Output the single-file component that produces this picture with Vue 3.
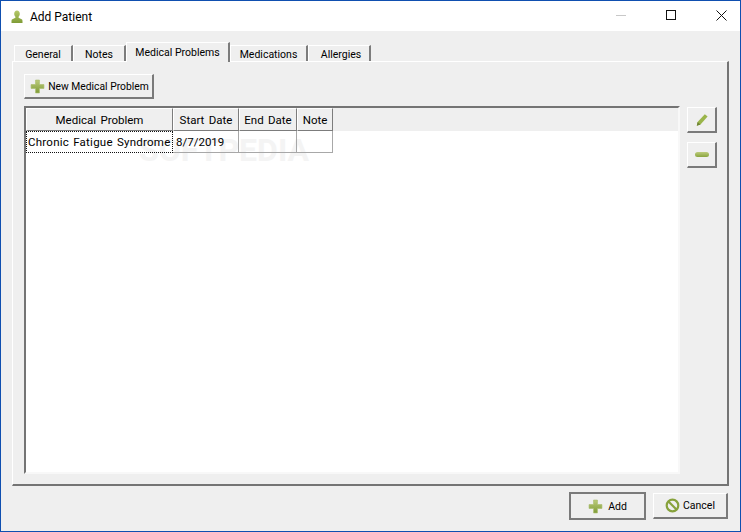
<script setup>
const columns = [
  { label: 'Medical Problem', width: 147 },
  { label: 'Start Date', width: 66 },
  { label: 'End Date', width: 58 },
  { label: 'Note', width: 36 },
]
const cells = [
  { text: 'Chronic Fatigue Syndrome', width: 147, focus: true },
  { text: '8/7/2019', width: 66 },
  { text: '', width: 58 },
  { text: '', width: 36 },
]
const tabs = [
  { label: 'General', width: 59, pad: 0 },
  { label: 'Notes', width: 53, pad: 0 },
  { label: 'Medical Problems', width: 104, pad: 0, active: true },
  { label: 'Medications', width: 78, pad: 0 },
  { label: 'Allergies', width: 63, pad: 4 },
]
</script>

<template>
  <div class="window">
    <header class="titlebar">
      <svg class="person" width="12" height="14" viewBox="0 0 12 14">
        <defs>
          <linearGradient id="pg" x1="0" y1="0" x2="0" y2="1">
            <stop offset="0" stop-color="#b5c96a" />
            <stop offset="1" stop-color="#7f9c36" />
          </linearGradient>
          <linearGradient id="plus1" x1="0" y1="0" x2="0" y2="1">
            <stop offset="0" stop-color="#bccb7c" />
            <stop offset="1" stop-color="#7f9c36" />
          </linearGradient>
          <linearGradient id="minus1" x1="0" y1="0" x2="0" y2="1">
            <stop offset="0" stop-color="#bccb7c" />
            <stop offset="1" stop-color="#8aa53e" />
          </linearGradient>
        </defs>
        <path d="M6 0.5C4.3 0.5 3.2 1.8 3.2 3.8C3.2 5.2 3.8 6.2 4.4 6.8V7.8L1.4 9.2C0.6 9.6 0.5 10.4 0.5 11.2V13H11.5V11.2C11.5 10.4 11.4 9.6 10.6 9.2L7.6 7.8V6.8C8.2 6.2 8.8 5.2 8.8 3.8C8.8 1.8 7.7 0.5 6 0.5Z" fill="url(#pg)" />
      </svg>
      <span class="title">Add Patient</span>
      <div class="controls">
        <svg width="11" height="11" viewBox="0 0 11 11"><path d="M0 5.5H10" stroke="#c8c8c8" fill="none" /></svg>
        <svg width="11" height="11" viewBox="0 0 11 11"><rect x="0.5" y="0.5" width="9" height="9" stroke="#111" fill="none" /></svg>
        <svg width="11" height="11" viewBox="0 0 11 11"><path d="M0.5 0.5L10.5 10.5M10.5 0.5L0.5 10.5" stroke="#111" fill="none" /></svg>
      </div>
    </header>

    <main class="body">
      <nav class="tabs">
        <div
          v-for="tab in tabs"
          :key="tab.label"
          class="tab"
          :class="{ active: tab.active }"
          :style="{ width: tab.width + 'px', paddingLeft: tab.pad + 'px' }"
        >{{ tab.label }}</div>
      </nav>

      <section class="panel">
        <button class="btn new-btn">
          <svg width="15" height="15" viewBox="0 0 14 14"><path d="M5.2 1H8.8V5.2H13V8.8H8.8V13H5.2V8.8H1V5.2H5.2Z" fill="url(#plus1)" stroke="#a8bb6a" stroke-width=".6" stroke-linejoin="round" /></svg>
          <span>New Medical Problem</span>
        </button>

        <div class="content">
          <div class="table">
            <div class="thead">
              <div v-for="c in columns" :key="c.label" class="th" :style="{ width: c.width + 'px' }">{{ c.label }}</div>
            </div>
            <div class="row">
              <div
                v-for="(c, i) in cells"
                :key="i"
                class="td"
                :class="{ focus: c.focus }"
                :style="{ width: c.width + 'px' }"
              >{{ c.text }}</div>
            </div>
            <div class="watermark">SOFTPEDIA</div>
          </div>

          <div class="side">
            <button class="btn side-btn">
              <svg width="14" height="14" viewBox="0 0 14 14"><path d="M9.8 1.2L12.6 3.6L5.5 11.4L1.8 12.8L2.6 9Z" fill="#9ab54a" /><path d="M2.6 9L1.8 12.8L5.5 11.4Z" fill="#6f8436" /></svg>
            </button>
            <button class="btn side-btn">
              <svg width="14" height="5" viewBox="0 0 14 5"><rect x="0" y="0" width="14" height="5" rx="2.5" fill="url(#minus1)" /></svg>
            </button>
          </div>
        </div>
      </section>

      <footer class="footer">
        <button class="btn default add-btn">
          <svg width="15" height="15" viewBox="0 0 14 14"><path d="M5.2 1H8.8V5.2H13V8.8H8.8V13H5.2V8.8H1V5.2H5.2Z" fill="url(#plus1)" stroke="#a8bb6a" stroke-width=".6" stroke-linejoin="round" /></svg>
          <span>Add</span>
        </button>
        <button class="btn cancel-btn">
          <svg width="15" height="15" viewBox="0 0 15 15"><circle cx="7.5" cy="7.5" r="5.8" fill="none" stroke="#87a23c" stroke-width="2.2" /><path d="M3.5 3.5L11.5 11.5" stroke="#87a23c" stroke-width="2.2" /></svg>
          <span>Cancel</span>
        </button>
      </footer>
    </main>
  </div>
</template>

<style scoped>
.window {
  width: 741px;
  height: 532px;
  box-sizing: border-box;
  border: 1px solid #0f4fb0;
  display: flex;
  flex-direction: column;
  background: #efefef;
  font-family: Roboto, "Noto Sans", sans-serif;
  font-size: 10.5px;
  color: #000;
  overflow: hidden;
}
.titlebar {
  height: 30px;
  box-sizing: border-box;
  padding-top: 1px;
  flex: none;
  background: #fff;
  display: flex;
  align-items: center;
  padding-left: 10px;
}
.title {
  margin-left: 7px;
  font-size: 12px;
}
.controls {
  margin-left: auto;
  display: flex;
  align-items: center;
  gap: 39px;
  padding-right: 13px;
  margin-top: -2px;
}
.body {
  flex: 1;
  display: flex;
  flex-direction: column;
  padding: 10px 11px 0;
  min-height: 0;
}
.tabs {
  display: flex;
  height: 20px;
  padding-left: 2px;
  align-items: flex-end;
  position: relative;
  z-index: 1;
  flex: none;
}
.tab {
  height: 16px;
  box-sizing: border-box;
  text-align: center;
  line-height: 17px;
  white-space: nowrap;
  border-top: 1px solid #fff;
  border-left: 1px solid #fff;
  border-right: 2px solid #7c7c7c;
}
.tab.active {
  height: 20px;
  line-height: 20px;
  background: #efefef;
  margin-bottom: -1px;
}
.panel {
  height: 425px;
  box-sizing: border-box;
  flex: none;
  border-top: 1px solid #fff;
  border-left: 1px solid #fff;
  border-right: 2px solid #747474;
  border-bottom: 2px solid #747474;
  padding: 12px 10px 10px 11px;
  display: flex;
  flex-direction: column;
}
.btn {
  box-sizing: border-box;
  padding: 0;
  font: inherit;
  color: inherit;
  background: #efefef;
  border-style: solid;
  border-width: 1px 2px 2px 1px;
  border-color: #fff #7a7a7a #7a7a7a #fff;
  display: flex;
  align-items: center;
  justify-content: center;
  white-space: nowrap;
}
.new-btn {
  width: 130px;
  height: 25px;
  flex: none;
  gap: 3px;
  padding-left: 2px;
  font-size: 10.3px;
}
.content {
  display: flex;
  margin-top: 7px;
  flex: 1;
  min-height: 0;
}
.table {
  position: relative;
  width: 656px;
  height: 368px;
  box-sizing: border-box;
  border-style: solid;
  border-width: 2px 2px 2px 2px;
  border-color: #747474 #f8f8f8 #f8f8f8 #747474;
  background: #fff;
  overflow: hidden;
}
.thead {
  display: flex;
  height: 23px;
  background: #efefef;
}
.th {
  box-sizing: border-box;
  text-align: center;
  line-height: 22px;
  font-size: 11.5px;
  word-spacing: 1.5px;
  white-space: nowrap;
  border-top: 1px solid #fff;
  border-left: 1px solid #fff;
  border-right: 1px solid #7c7c7c;
  border-bottom: 1px solid #7c7c7c;
}
.row {
  display: flex;
  height: 22px;
}
.td {
  position: relative;
  z-index: 1;
  box-sizing: border-box;
  line-height: 22px;
  padding-left: 3px;
  font-size: 11.5px;
  word-spacing: 1px;
  white-space: nowrap;
  overflow: hidden;
  border-right: 1px solid #a8a8a8;
  border-bottom: 1px solid #a8a8a8;
}
.td.focus {
  border: 1px dotted #111;
  line-height: 20px;
  padding-left: 1px;
  letter-spacing: 0.25px;
}
.watermark {
  position: absolute;
  left: 113px;
  top: 25px;
  font-size: 32px;
  font-weight: 700;
  color: #f4f4f4;
  line-height: 34px;
  pointer-events: none;
}
.side {
  margin-left: 7px;
  padding-top: 1px;
  display: flex;
  flex-direction: column;
  gap: 9px;
}
.side-btn {
  width: 30px;
  height: 26px;
}
.footer {
  display: flex;
  justify-content: flex-end;
  align-items: center;
  gap: 7px;
  padding-top: 6px;
  padding-right: 1px;
}
.default {
  border: 2px solid #7a7a7a;
}
.add-btn {
  width: 77px;
  height: 28px;
  gap: 5px;
}
.cancel-btn {
  width: 75px;
  height: 26px;
  gap: 3px;
}
</style>
